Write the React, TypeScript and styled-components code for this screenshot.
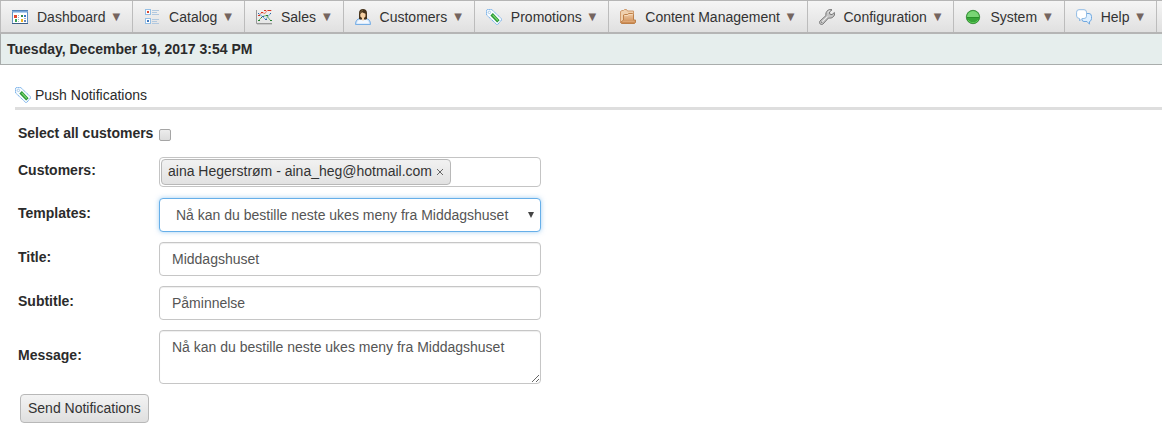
import React from "react";
import styled, { createGlobalStyle } from "styled-components";

const GlobalStyle = createGlobalStyle`
  *, *::before, *::after { box-sizing: border-box; }
  body {
    margin: 0;
    background: #fff;
    color: #2b2b2b;
    font: 14px/20px "Liberation Sans", Arial, sans-serif;
  }
  button, input, select, textarea { font: inherit; color: inherit; margin: 0; }
`;

const MenuBar = styled.nav`
  display: flex;
  height: 34px;
  border: solid #b5b5b5;
  border-width: 1px 0 2px;
  background: linear-gradient(#f5f5f5, #e0e0e0);
`;

const MenuItem = styled.button`
  display: flex;
  align-items: center;
  flex: none;
  padding: 0 12px 0 11px;
  border: 0;
  border-right: 1px solid #bcbcbc;
  background: none;
  white-space: pre;
  color: #333;
  &:first-child { border-left: 1px solid #bcbcbc; }
`;

const MenuText = styled.span`
  margin: 0 3px 0 9px;
  &::after { content: " "; }
`;

const Icon = styled.svg`
  display: block;
  flex: none;
  width: 16px;
  height: 16px;
`;

const Caret = styled.span`
  font: 10px/20px "DejaVu Sans", sans-serif;
  color: #75655f;
`;

const DateBar = styled.div`
  padding: 5px 6px;
  border: solid #a9adac;
  border-width: 0 0 1px 1px;
  background: #e6eeed;
  font-weight: bold;
`;

const Main = styled.main`
  padding: 20px 0 20px 15px;
`;

const Heading = styled.h1`
  display: flex;
  align-items: center;
  gap: 4px;
  margin: 0 0 13px;
  padding-bottom: 2px;
  border-bottom: 3px solid #dedede;
  font-size: 14px;
  font-weight: normal;
`;

const Form = styled.form`
  display: flex;
  flex-direction: column;
  gap: 10px;
  padding: 0 3px;
`;

const Row = styled.div`
  display: grid;
  grid-template-columns: 141px minmax(0, 382px);
  align-items: center;
`;

const Label = styled.label<{ $tight?: boolean }>`
  margin-bottom: ${(p) => (p.$tight ? 4 : 5)}px;
  font-weight: bold;
  white-space: nowrap;
`;

const Check = styled.input`
  appearance: none;
  width: 12px;
  height: 12px;
  border: 1px solid #a5a5a5;
  border-radius: 2px;
  background: linear-gradient(#ececec, #dcdcdc);
  &:checked { background: #666; }
`;

const TokenField = styled.div`
  display: flex;
  align-items: center;
  height: 30px;
  margin-bottom: 1px;
  padding: 1px;
  border: 1px solid #c4c4c4;
  border-radius: 4px;
`;

const Token = styled.span`
  display: flex;
  align-items: center;
  flex: none;
  height: 26px;
  padding: 0 6px 2px 6px;
  border: 1px solid #b8b8b8;
  border-radius: 4px;
  background: linear-gradient(#f1f1f1, #e2e2e2);
  color: #333;
`;

const RemoveToken = styled.button`
  display: flex;
  margin: 2px 0 0 4px;
  padding: 0;
  border: 0;
  background: none;
  svg { display: block; width: 8px; height: 8px; }
`;

const TokenInput = styled.input`
  flex: 1;
  min-width: 0;
  border: 0;
  outline: 0;
  background: none;
`;

const SelectWrap = styled.div`
  position: relative;
  &::after {
    content: "";
    position: absolute;
    top: 14px;
    right: 7px;
    width: 6px;
    height: 6px;
    background: #444;
    clip-path: polygon(0 0, 100% 0, 50% 100%);
    pointer-events: none;
  }
`;

const Select = styled.select`
  appearance: none;
  display: block;
  width: 100%;
  height: 34px;
  padding: 0 20px 0 16px;
  border: 1px solid #66afe9;
  border-radius: 4px;
  outline: 0;
  background: #fff;
  box-shadow: 0 0 5px rgba(102, 175, 233, 0.6);
  color: #555;
`;

const TextInput = styled.input`
  width: 100%;
  height: 34px;
  padding: 6px 12px;
  border: 1px solid #c6c6c6;
  border-radius: 4px;
  box-shadow: inset 0 1px 1px rgba(0, 0, 0, 0.07);
  color: #555;
`;

const TextArea = styled.textarea`
  display: block;
  width: 100%;
  height: 54px;
  padding: 6px 12px;
  border: 1px solid #c6c6c6;
  border-radius: 4px;
  box-shadow: inset 0 1px 1px rgba(0, 0, 0, 0.07);
  color: #555;
`;

const SendButton = styled.button`
  align-self: flex-start;
  height: 29px;
  margin-left: 2px;
  padding: 0 7px 2px;
  border: 1px solid #b8b8b8;
  border-radius: 4px;
  background: linear-gradient(#f3f3f3, #dfdfdf);
  color: #333;
`;

const DashboardIcon = () => (
  <Icon viewBox="0 0 16 16" aria-hidden="true">
    <rect x=".5" y="1.500" width="15" height="13" rx="1" fill="#fff" stroke="#5f92c4" />
    <path d="M1 2h14v2H1z" fill="#78a8dc" />
    <path d="M0 1.500h16" stroke="#4f80b4" />
    <path d="M1 3.500h14" stroke="#b3d0ee" />
    <path d="M0 14.500h16" stroke="#3c5f85" />
    <path d="M2 6h3v3H2z" fill="#e2492f" />
    <path d="M9 6h2v2H9z" fill="#348b4b" />
    <path d="M12 6h2v2h-2z" fill="#3a76c8" />
    <path d="M3 10h2v3H3z" fill="#3fa553" />
    <path d="M9 10h2v3H9z" fill="#efb221" />
    <path d="M12 11h2v2h-2z" fill="#6685b8" />
    <path d="M6 6.500h1M6 8.500h1M6 10.500h1M6 12.500h1M12 9.500h2" stroke="#9fb3c8" />
  </Icon>
);

const CatalogIcon = () => (
  <Icon viewBox="0 0 16 16" aria-hidden="true">
    <g fill="#fff" stroke="#94bfe5">
      <rect x="1.500" y=".5" width="5" height="5" />
      <rect x="1.500" y="9.500" width="5" height="5" />
    </g>
    <path d="M3 2h2v2H3z" fill="#d9482f" />
    <path d="M3 11h2v2H3z" fill="#4078bd" />
    <path d="M8 1.500h7M8 3.500h5M8 5.500h7M8 10.500h7M8 12.500h5M8 14.500h7" stroke="#b1c8df" />
  </Icon>
);

const SalesIcon = () => (
  <Icon viewBox="0 0 16 16" aria-hidden="true">
    <path d="M.5 1v13.500H16" fill="none" stroke="#999" />
    <path d="M1 15.500h15" stroke="#c9c9c9" />
    <g fill="none">
      <path d="M2.500 6.500 6 3.500l3 1 2-3h4.500" stroke="#ee826e" />
      <path d="m2.500 4.500 4 3 3 3 5-6" stroke="#75a8dc" />
      <path d="m2.500 11.500 4-4 4-1 4 5" stroke="#6cb76d" />
    </g>
    <path d="M2 6h2v1H2zM5 3h2v1H5zM8 1h2v1H8zM12 1h3v1h-3z" fill="#d6341f" />
    <path d="M2 4h1v1H2zM6 7h2v1H6zM9 10h2v1H9zM14 4h1v1h-1z" fill="#2c67a7" />
    <path d="M2 11h2v1H2zM5 8h1v1H5zM10 6h2v1h-2zM14 11h2v1h-2z" fill="#278030" />
  </Icon>
);

const CustomerIcon = () => (
  <Icon viewBox="0 0 16 16" aria-hidden="true">
    <path d="M.5 15.500c0-3.700 1.500-5.600 4.500-6h6c3 .4 4.500 2.300 4.500 6z" fill="#c9e0f8" stroke="#78afe5" />
    <path d="M2 14.500c.2-2 1-3 3-3.700h6c2 .7 2.800 1.700 3 3.700z" fill="#f2f8ff" />
    <path d="M4 10V4c0-2.700 1.600-4 4-4s4 1.300 4 4v6l-2 .7-2-1-2 1z" fill="#47331b" />
    <path d="M5.300 5 7 3.300l3.500 1.500v2.700L9 9v1.700L8 12l-1-1.300V9L5.300 7.500z" fill="#f5d0a3" />
    <path d="M5 4.500c.5-2 1.500-3 3-3" fill="none" stroke="#78613b" />
  </Icon>
);

const TagIcon = () => (
  <Icon viewBox="0 0 16 16" aria-hidden="true">
    <path d="M.6 1.200 1.200.6H5.800L15.500 9.800v1.200L11.800 15.400h-1.200L.6 6z" fill="#f8fcff" stroke="#73aee9" strokeDasharray="1.600 .4" />
    <circle cx="3.400" cy="3.400" r="1.200" fill="#fff" stroke="#98bddd" strokeWidth=".8" />
    <path d="m6.800 6.500 4.400 4.600" stroke="#269437" strokeWidth="3.400" strokeLinecap="square" />
    <path d="m7 6.300 4.400 4.600" stroke="#74d26a" strokeWidth="1.400" strokeLinecap="round" />
  </Icon>
);

const FolderIcon = () => (
  <Icon viewBox="0 0 16 16" aria-hidden="true">
    <defs>
      <linearGradient id="folder" x2="0" y2="1">
        <stop stopColor="#f3cda7" />
        <stop offset="1" stopColor="#c9864c" />
      </linearGradient>
    </defs>
    <path d="M.5 13V2.500l1.500-1h1.500l1-1h2l1 1.500H13.500v9z" fill="#f0d0ad" stroke="#cf9a6c" />
    <path d="M.5 13.500 3.500 11V6l1-.5h3l1-1h4l1 1v5.500h2v2.500l-1 1H1.500z" fill="url(#folder)" stroke="#bd8049" />
    <path d="M4.500 6.500H8l1-1h3.500" fill="none" stroke="#f5dabb" />
    <path d="M2.500 12.500h12" stroke="#dda774" />
  </Icon>
);

const WrenchIcon = () => (
  <Icon viewBox="0 0 16 16" aria-hidden="true">
    <path d="m1 12 6-5.500c-.5-2 .2-4 1.900-5.200C10 .5 11.500.3 13 .8L10.500 3l.3 2.200 2.200.4L15.400 3.500c.5 1.800 0 3.500-1.500 4.600-1.200 1-2.800 1.200-4.400.9L4 15c-.8.7-2 .7-2.700.1-.9-.8-1-2.200-.3-3.100z" fill="#c5c5c5" stroke="#777" />
    <path d="m2.300 13.500 6.200-6M9 3.500c.3-1 1-1.500 1.700-1.800" fill="none" stroke="#ededed" />
    <circle cx="2.700" cy="13.200" r=".7" fill="#777" />
  </Icon>
);

const SystemIcon = () => (
  <Icon viewBox="0 0 16 16" aria-hidden="true">
    <circle cx="8" cy="8" r="6.700" fill="#37a438" stroke="#2d852d" strokeWidth=".8" />
    <path d="M2 8a6 6 0 0 1 12 0z" fill="#79d575" />
    <path d="M2 8.500h12" stroke="#289229" />
    <path d="M3 11c2 3.500 8 3.500 10 0" fill="none" stroke="#5fcb59" />
  </Icon>
);

const HelpIcon = () => (
  <Icon viewBox="0 0 16 16" aria-hidden="true">
    <path d="M8 4.500h5q2.500 0 2.500 3v2q0 2.500-2 3v2.700L11 12.500H8q-2 0-2-2v-4q0-2 2-2z" fill="#deefff" stroke="#70a8df" />
    <path d="M3 .7h5q2.500 0 2.500 2.500v4Q10.500 9.500 8 9.500H6L3.500 12V9.500Q.6 9.300.6 7V3.200Q.6.7 3 .7z" fill="#fff" stroke="#91bce5" />
  </Icon>
);

const menu = [
  { text: "Dashboard", Glyph: DashboardIcon },
  { text: "Catalog", Glyph: CatalogIcon },
  { text: "Sales", Glyph: SalesIcon },
  { text: "Customers", Glyph: CustomerIcon },
  { text: "Promotions", Glyph: TagIcon },
  { text: "Content Management", Glyph: FolderIcon },
  { text: "Configuration", Glyph: WrenchIcon },
  { text: "System", Glyph: SystemIcon },
  { text: "Help", Glyph: HelpIcon },
];

const template = "Nå kan du bestille neste ukes meny fra Middagshuset";

export default function App() {
  return (
    <>
      <GlobalStyle />
      <MenuBar>
        {menu.map(({ text, Glyph }) => (
          <MenuItem key={text} type="button">
            <Glyph />
            <MenuText>{text}</MenuText>
            <Caret aria-hidden="true">▼</Caret>
          </MenuItem>
        ))}
      </MenuBar>
      <DateBar>Tuesday, December 19, 2017 3:54 PM</DateBar>
      <Main>
        <Heading>
          <TagIcon />
          Push Notifications
        </Heading>
        <Form onSubmit={(e) => e.preventDefault()}>
          <Row>
            <Label htmlFor="all" $tight>Select all customers</Label>
            <Check id="all" type="checkbox" />
          </Row>
          <Row>
            <Label htmlFor="customers">Customers:</Label>
            <TokenField>
              <Token>
                aina Hegerstrøm - aina_heg@hotmail.com
                <RemoveToken type="button" aria-label="Remove">
                  <svg viewBox="0 0 8 8" aria-hidden="true">
                    <path d="m1 1 6 6m0-6L1 7" stroke="#666" />
                  </svg>
                </RemoveToken>
              </Token>
              <TokenInput id="customers" />
            </TokenField>
          </Row>
          <Row>
            <Label htmlFor="template">Templates:</Label>
            <SelectWrap>
              <Select id="template">
                <option>{template}</option>
              </Select>
            </SelectWrap>
          </Row>
          <Row>
            <Label htmlFor="title">Title:</Label>
            <TextInput id="title" defaultValue="Middagshuset" />
          </Row>
          <Row>
            <Label htmlFor="subtitle">Subtitle:</Label>
            <TextInput id="subtitle" defaultValue="Påminnelse" />
          </Row>
          <Row>
            <Label htmlFor="message">Message:</Label>
            <TextArea id="message" defaultValue={template} />
          </Row>
          <SendButton type="submit">Send Notifications</SendButton>
        </Form>
      </Main>
    </>
  );
}
